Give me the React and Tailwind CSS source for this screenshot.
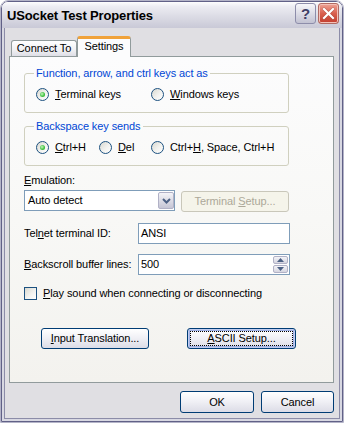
import React from 'react';

function Radio({ checked }) {
  return (
    <span className="flex h-[13px] w-[13px] shrink-0 items-center justify-center rounded-full border border-[#1c5180] bg-[linear-gradient(135deg,#d8d8d0,#f2f2ef_55%,#ffffff)]">
      {checked && (
        <span className="h-[5px] w-[5px] rounded-full bg-[radial-gradient(circle_at_40%_40%,#c8f5c0,#45c445_55%,#1f9a1f)]" />
      )}
    </span>
  );
}

function Check() {
  return (
    <span className="h-[13px] w-[13px] shrink-0 border border-[#1c5180] bg-[linear-gradient(135deg,#d8d8d0,#f2f2ef_55%,#ffffff)]" />
  );
}

function XpButton({ children, className, focused }) {
  if (focused) {
    return (
      <div className={'flex rounded-[3px] border border-[#003c74] bg-[linear-gradient(#ffffff,#f1f1f6_45%,#dcdce6)] p-[2px] shadow-[inset_0_0_0_1px_#c2cdf0,inset_0_0_0_2px_#9fb0e4] ' + className}>
        <div className="flex flex-1 items-center justify-center border border-dotted border-[#000]">
          {children}
        </div>
      </div>
    );
  }
  return (
    <div className={'flex items-center justify-center rounded-[3px] border border-[#003c74] bg-[linear-gradient(#ffffff,#f1f1f6_45%,#dcdce6)] ' + className}>
      {children}
    </div>
  );
}

function Tri({ up }) {
  return (
    <svg width="7" height="4" viewBox="0 0 7 4">
      {up ? <path d="M0 4 L3.5 0 L7 4 Z" fill="#4d6185" /> : <path d="M0 0 L3.5 4 L7 0 Z" fill="#4d6185" />}
    </svg>
  );
}

export default function App() {
  return (
    <div className="h-[423px] w-[344px] bg-white font-['Liberation_Sans',Arial,sans-serif] text-[11px] leading-[13px] tracking-[-0.1px] text-black">
      <div className="flex h-full flex-col overflow-hidden rounded-t-[8px] border border-[#b4b4c8]">
        <div className="flex h-full flex-col overflow-hidden rounded-t-[7px] border border-[#616187]">
          {/* Title bar */}
          <div className="flex h-[26px] shrink-0 items-start bg-[linear-gradient(#fdfdfe,#ececf2_18%,#dcdce5_55%,#c9c9d7)] pl-[5px] pr-[3px] pt-px">
            <span className="mt-[5px] text-[13px] font-bold leading-[15px] tracking-[-0.15px] text-[#000]">USocket Test Properties</span>
            <div className="ml-auto flex gap-[2px]">
              <div className="flex h-[21px] w-[21px] items-center justify-center rounded-[3px] border border-[#8d8daa] bg-[linear-gradient(#f7f7fa,#dcdce6_50%,#c2c2d2)] text-[15px] font-bold leading-[15px] text-[#3f3f66]">
                ?
              </div>
              <div className="flex h-[21px] w-[21px] items-center justify-center rounded-[3px] border border-[#b06a62] bg-[linear-gradient(#eea496,#d9604f_50%,#c23d2e)] shadow-[inset_0_0_0_1px_#f3c1b8]">
                <svg width="13" height="13" viewBox="0 0 13 13">
                  <path d="M2 2 L11 11 M11 2 L2 11" stroke="#7a2a22" strokeWidth="3.2" strokeLinecap="square" opacity="0.35" />
                  <path d="M2 2 L11 11 M11 2 L2 11" stroke="#ffffff" strokeWidth="2.2" strokeLinecap="square" />
                </svg>
              </div>
            </div>
          </div>
          {/* Body */}
          <div className="flex flex-1 flex-col border-x-2 border-b-2 border-[#d8d8e2]">
            <div className="flex flex-1 flex-col border-x border-b border-[#8c8ca8] bg-[#e0dfe3] pl-[4px] pt-[8px]">
              {/* tabs */}
              <div className="flex items-end pl-[2px]">
                <div className="flex h-[16px] w-[66px] items-center justify-center rounded-t-[3px] border-x border-t border-[#919b9c] bg-[linear-gradient(#ffffff,#f0f0f3_60%,#dedee6)]">
                  Connect To
                </div>
                <div className="relative z-10 -mb-px flex h-[21px] w-[54px] items-center justify-center rounded-t-[3px] border-x border-t-[3px] border-x-[#919b9c] border-t-[#f0a23a] bg-[#fcfcfd] pb-[3px]">
                  Settings
                </div>
              </div>
              {/* panel */}
              <div className="flex h-[327px] w-[325px] flex-col border border-[#919b9c] bg-[linear-gradient(#fcfcfd,#f8f8f6_50%,#f3f2ee)] pl-[14px] pt-[9px]">
                <fieldset className="w-[265px] rounded-[3px] border border-[#d0d0bf] px-0 pb-[11px] pt-[8px]">
                  <legend className="ml-[9px] px-[2px] leading-[14px] text-[#0046d5]">Function, arrow, and ctrl keys act as</legend>
                  <div className="flex items-center pl-[11px]">
                    <div className="flex w-[115px] items-center gap-[6px]">
                      <Radio checked />
                      <span><u>T</u>erminal keys</span>
                    </div>
                    <div className="flex items-center gap-[6px]">
                      <Radio />
                      <span><u>W</u>indows keys</span>
                    </div>
                  </div>
                </fieldset>
                <fieldset className="mt-[6px] w-[265px] rounded-[3px] border border-[#d0d0bf] px-0 pb-[11px] pt-[8px]">
                  <legend className="ml-[9px] px-[2px] leading-[14px] text-[#0046d5]">Backspace key sends</legend>
                  <div className="flex items-center pl-[11px]">
                    <div className="flex w-[63px] items-center gap-[6px]">
                      <Radio checked />
                      <span><u>C</u>trl+H</span>
                    </div>
                    <div className="flex w-[52px] items-center gap-[6px]">
                      <Radio />
                      <span><u>D</u>el</span>
                    </div>
                    <div className="flex items-center gap-[6px]">
                      <Radio />
                      <span>Ctrl+<u>H</u>, Space, Ctrl+H</span>
                    </div>
                  </div>
                </fieldset>

                <div className="mt-[8px]"><u>E</u>mulation:</div>
                <div className="mt-[3px] flex items-start gap-[6px]">
                  <div className="flex h-[21px] w-[151px] items-center border border-[#7f9db9] bg-white pl-[3px]">
                    <span>Auto detect</span>
                    <div className="ml-auto flex h-[17px] w-[16px] items-center justify-center rounded-[2px] border border-[#b1b1c6] bg-[linear-gradient(#f4f4f8,#dcdce6_50%,#c5c5d5)]">
                      <svg width="9" height="6" viewBox="0 0 9 6">
                        <path d="M1 1 L4.5 4.5 L8 1" stroke="#4d6185" strokeWidth="2" fill="none" />
                      </svg>
                    </div>
                  </div>
                  <div className="mt-px flex h-[21px] w-[108px] items-center justify-center rounded-[3px] border border-[#c9c7ba] bg-[#f5f4ea] text-[#aca899]">
                    <span>Terminal <u>S</u>etup...</span>
                  </div>
                </div>

                <div className="mt-[11px] flex items-center">
                  <span className="w-[114px]">Tel<u>n</u>et terminal ID:</span>
                  <div className="flex h-[21px] w-[152px] items-center border border-[#7f9db9] bg-white pl-[2px]">ANSI</div>
                </div>

                <div className="mt-[10px] flex items-center">
                  <span className="w-[114px]"><u>B</u>ackscroll buffer lines:</span>
                  <div className="flex h-[21px] w-[152px] items-center border border-[#7f9db9] bg-white pl-[2px] pr-px">
                    <span>500</span>
                    <div className="ml-auto flex h-[17px] w-[15px] flex-col gap-px">
                      <div className="flex h-[8px] items-center justify-center rounded-[2px] border border-[#b1b1c6] bg-[linear-gradient(#f4f4f8,#d5d5e0)]">
                        <Tri up />
                      </div>
                      <div className="flex h-[8px] items-center justify-center rounded-[2px] border border-[#b1b1c6] bg-[linear-gradient(#f4f4f8,#d5d5e0)]">
                        <Tri />
                      </div>
                    </div>
                  </div>
                </div>

                <div className="mt-[12px] flex items-center gap-[6px]">
                  <Check />
                  <span><u>P</u>lay sound when connecting or disconnecting</span>
                </div>

                <div className="mt-[28px] flex gap-[38px] pl-[17px]">
                  <XpButton className="h-[21px] w-[108px]">
                    <span><u>I</u>nput Translation...</span>
                  </XpButton>
                  <XpButton focused className="h-[21px] w-[109px]">
                    <span><u>A</u>SCII Setup...</span>
                  </XpButton>
                </div>
              </div>
              {/* dialog buttons */}
              <div className="mt-[8px] flex w-[325px] justify-end gap-[7px]">
                <XpButton className="h-[22px] w-[74px]">OK</XpButton>
                <XpButton className="h-[22px] w-[73px]">Cancel</XpButton>
              </div>
            </div>
          </div>
        </div>
      </div>
    </div>
  );
}
